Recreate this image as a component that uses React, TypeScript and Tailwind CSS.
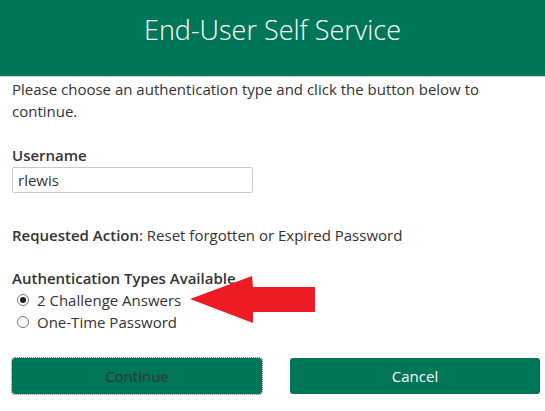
import { useState } from 'react'

export default function App() {
  const [choice, setChoice] = useState('challenge')

  return (
    <div className="w-[545px] h-[411px] bg-white text-[#333] font-['Open_Sans',sans-serif] overflow-hidden">
      {/* Header */}
      <div className="h-[77px] bg-[#007659] border-b border-[#bcd9ce] flex justify-center pt-[10px]">
        <h1 className="text-white text-[27px] font-light leading-[40px]">End-User Self Service</h1>
      </div>

      <div className="px-3 pt-[1px] pr-[5px] text-[15px] leading-[22px]">
        <p className="pr-[50px]">Please choose an authentication type and click the button below to continue.</p>

        <label className="block mt-[22px] font-semibold">Username</label>
        <input
          defaultValue="rlewis"
          className="mt-[1px] w-[241px] h-[26px] border border-[#c8c8c8] rounded-[2px] px-[5px] text-[15px] outline-none"
        />

        <p className="mt-[31px]">
          <span className="font-semibold">Requested Action</span>: Reset forgotten or Expired Password
        </p>

        <div className="relative mt-[21px]">
          <p className="font-semibold">Authentication Types Available</p>
          {[
            ['challenge', '2 Challenge Answers'],
            ['otp', 'One-Time Password'],
          ].map(([id, text]) => (
            <label key={id} className="flex items-center gap-[8px] pl-[5px] h-[22px]">
              <span className="w-[12px] h-[12px] rounded-full border border-[#777] flex items-center justify-center" onClick={() => setChoice(id)}>
                {choice === id && <span className="w-[6px] h-[6px] rounded-full bg-[#222]" />}
              </span>
              <span>{text}</span>
            </label>
          ))}
          {/* red callout arrow */}
          <svg className="absolute left-[166px] top-[9px]" width="140" height="48" viewBox="0 0 140 48">
            <polygon points="12,23 74,0 75,11 137,11 137,36 75,36 75,47" fill="#ed1c24" />
          </svg>
        </div>

        <div className="grid grid-cols-[250px_250px] gap-[28px] mt-[25px]">
          <button className="h-[36px] rounded-[3px] bg-[#007659] text-[#333] outline-1 outline-dotted outline-[#777] text-[15px]">
            Continue
          </button>
          <button className="h-[36px] rounded-[3px] bg-[#007659] text-white text-[15px]">Cancel</button>
        </div>
      </div>
    </div>
  )
}
